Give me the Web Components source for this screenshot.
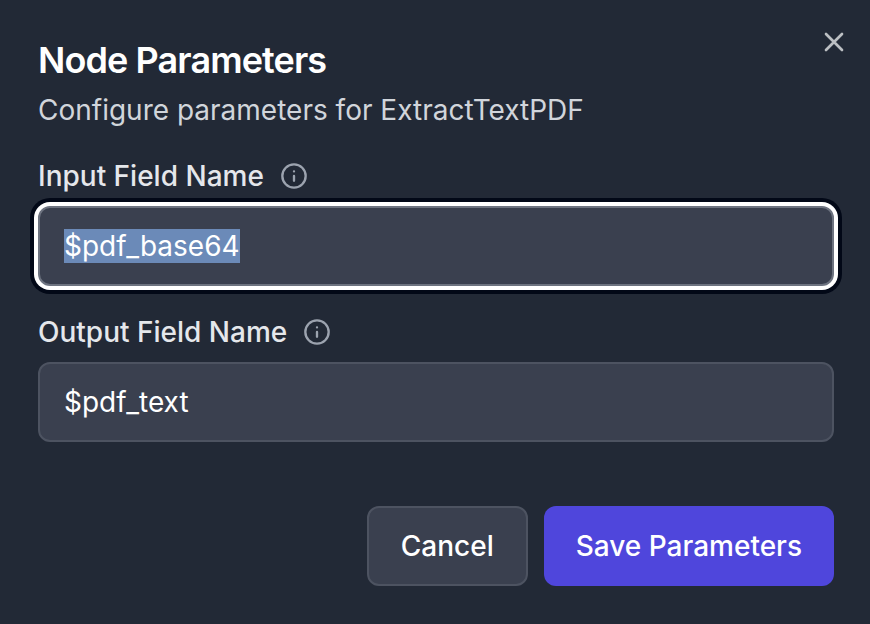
<!DOCTYPE html>
<html lang="en">
<head>
<meta charset="utf-8">
<title>Node Parameters</title>
<style>
html,body{margin:0;height:100%;background:#222936}
body{font-family:Inter,"Liberation Sans",sans-serif;overflow:hidden}
</style>
</head>
<body>
<param-dialog heading="Node Parameters" description="Configure parameters for ExtractTextPDF">
  <param-field label="Input Field Name" active><span>$pdf_base64</span></param-field>
  <param-field label="Output Field Name"><span>$pdf_text</span></param-field>
  <action-button slot="actions">Cancel</action-button>
  <action-button slot="actions" primary>Save Parameters</action-button>
</param-dialog>
<script>
class InfoIcon extends HTMLElement {
  constructor() {
    super();
    this.attachShadow({mode: 'open'}).innerHTML = `
      <style>:host{display:block;width:28px;height:28px;color:#9ca3af}svg{display:block}</style>
      <svg width="28" height="28" viewBox="0 0 24 24" fill="none" stroke="currentColor" stroke-width="2" stroke-linecap="round" stroke-linejoin="round"><circle cx="12" cy="12" r="10"/><path d="M12 16v-4M12 8h.01"/></svg>`;
  }
}
customElements.define('info-icon', InfoIcon);

class ActionButton extends HTMLElement {
  constructor() {
    super();
    this.attachShadow({mode: 'open'}).innerHTML = `
      <style>
        :host{display:block}
        button{box-sizing:border-box;height:80px;padding:0 32px;border:2px solid #4d5361;border-radius:12px;background:#3a404f;color:#fff;font:500 28px/40px Inter,"Liberation Sans",sans-serif;white-space:nowrap}
        :host([primary]) button{background:#4f46dc;border:0}
      </style>
      <button type="button"><slot></slot></button>`;
  }
}
customElements.define('action-button', ActionButton);

class ParamField extends HTMLElement {
  constructor() {
    super();
    this.attachShadow({mode: 'open'}).innerHTML = `
      <style>
        :host{display:block}
        .label{display:flex;align-items:center;gap:16px;height:28px;margin-bottom:16px;color:#e5e7eb;font-weight:500;font-size:28px;line-height:28px;white-space:nowrap}
        .box{box-sizing:border-box;display:flex;align-items:center;height:80px;padding:0 24px;border:2px solid #4d5361;border-radius:12px;background:#3a404f;color:#fff;font-size:28px;line-height:34px}
        :host([active]) .box{border-color:#6d7380;box-shadow:0 0 0 4px #fff,0 0 0 8px #020817}
        :host([active]) ::slotted(span){background:#6b8ab8}
      </style>
      <div class="label"><span class="name"></span><info-icon></info-icon></div>
      <div class="box"><slot></slot></div>`;
  }
  connectedCallback() {
    this.shadowRoot.querySelector('.name').textContent = this.getAttribute('label');
  }
}
customElements.define('param-field', ParamField);

class ParamDialog extends HTMLElement {
  constructor() {
    super();
    this.attachShadow({mode: 'open'}).innerHTML = `
      <style>
        :host{display:block;box-sizing:border-box;position:relative;height:624px;padding:42px 36px 0 38px;background:#222936}
        h2{margin:0;color:#fff;font-size:36px;line-height:36px;font-weight:600;letter-spacing:-.9px}
        p{margin:12px 0 0;color:#d1d5db;font-size:28px;line-height:40px}
        .fields{display:grid;gap:32px;margin-top:32px}
        footer{display:flex;justify-content:flex-end;gap:16px;margin-top:64px}
        .close{position:absolute;right:20px;top:26px;width:32px;height:32px;color:#bcbfc3}
      </style>
      <h2></h2><p></p>
      <div class="fields"><slot></slot></div>
      <footer><slot name="actions"></slot></footer>
      <svg class="close" viewBox="0 0 24 24" fill="none" stroke="currentColor" stroke-width="2" stroke-linecap="round"><path d="M18 6 6 18M6 6l12 12"/></svg>`;
  }
  connectedCallback() {
    this.shadowRoot.querySelector('h2').textContent = this.getAttribute('heading');
    this.shadowRoot.querySelector('p').textContent = this.getAttribute('description');
  }
}
customElements.define('param-dialog', ParamDialog);
</script>
</body>
</html>
